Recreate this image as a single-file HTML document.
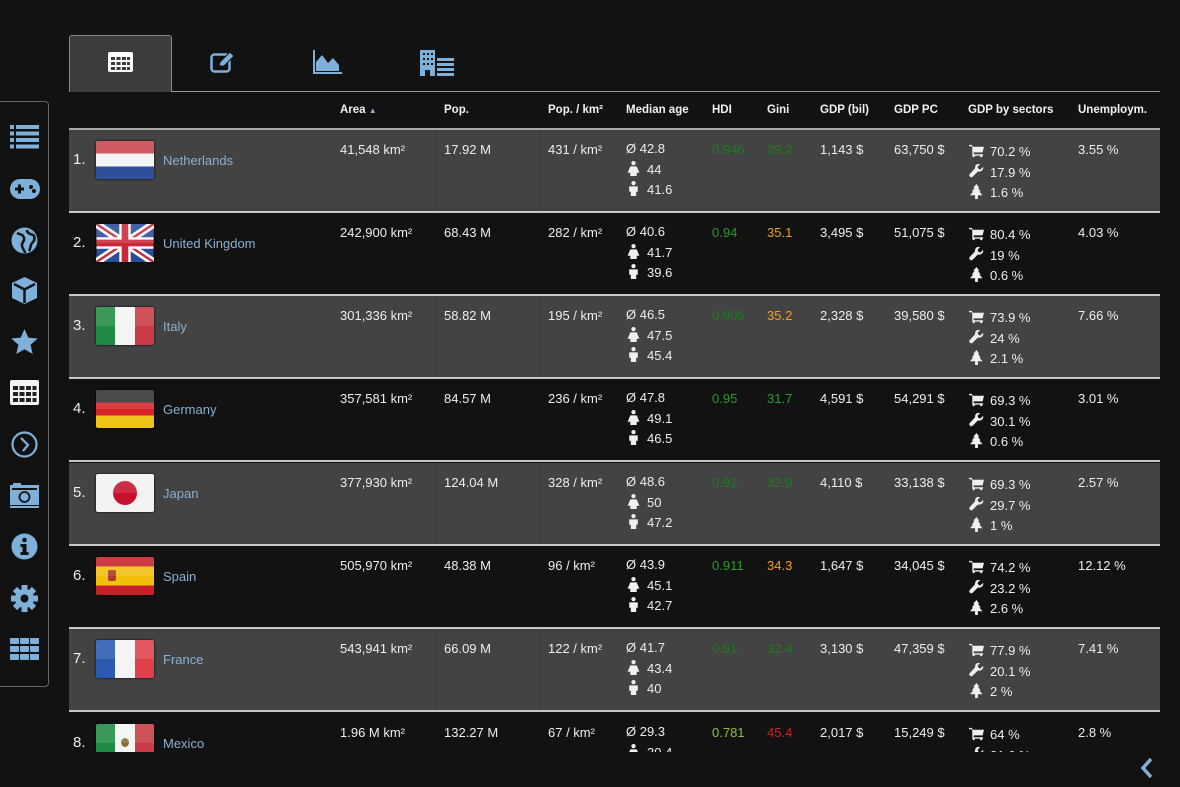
<!DOCTYPE html>
<html><head><meta charset="utf-8"><style>
*{margin:0;padding:0;box-sizing:border-box}
body{width:1180px;height:787px;background:#131212;font-family:"Liberation Sans",sans-serif;color:#eee;overflow:hidden;position:relative;font-size:13px}
.a{position:absolute}
.tab0{left:69px;top:35px;width:103px;height:57px;background:#3c3c3c;border:1px solid #888;border-bottom:none;border-radius:3px 3px 0 0}
.tline{left:171px;top:91px;width:989px;height:1px;background:#999}
.side{left:-4px;top:101px;width:53px;height:586px;border:1px solid #666;border-radius:4px;background:#111}
.hd{top:104px;font-weight:bold;font-size:11.5px;color:#f2f2f2}
.hline{left:69px;top:128px;width:1091px;height:2px;background:#aaa}
.clip{left:69px;top:130px;width:1091px;height:622px;overflow:hidden}
.row{position:absolute;left:0;width:1091px;height:83px;border-bottom:2px solid #c8c8c8}
.odd{background:#434343}
.row div{position:absolute}
.n{left:4px;top:21px;font-size:15px}
.f{left:27px;top:11px;width:58px;height:38px;border-radius:2px;overflow:hidden;box-shadow:0 0 2px #000}
.f::after{content:"";position:absolute;left:0;top:0;right:0;height:50%;background:rgba(255,255,255,.12)}
.nm{left:94px;top:23px;color:#8ab0d2}
.c{top:12px}
.ln{line-height:20.5px}
.ic{display:inline-block;width:15px;vertical-align:-2px;margin-right:6px}
.sep{top:0;width:1px;height:81px;background:#3e3e3e}
</style></head><body>
<div class="a tab0"></div>
<svg class="a" style="left:108px;top:52px" width="25" height="20" viewBox="0 0 25 20"><rect x="0" y="0" width="25" height="20" rx="2" fill="#fff"/><g fill="#3c3c3c"><rect x="3" y="5" width="4" height="3"/><rect x="8.5" y="5" width="4" height="3"/><rect x="14" y="5" width="4" height="3"/><rect x="19" y="5" width="3" height="3"/><rect x="3" y="10" width="4" height="3"/><rect x="8.5" y="10" width="4" height="3"/><rect x="14" y="10" width="4" height="3"/><rect x="19" y="10" width="3" height="3"/><rect x="3" y="15" width="4" height="3"/><rect x="8.5" y="15" width="4" height="3"/><rect x="14" y="15" width="4" height="3"/><rect x="19" y="15" width="3" height="3"/></g></svg>
<svg class="a" style="left:210px;top:50px" width="26" height="24" viewBox="0 0 26 24"><rect x="1.5" y="4.5" width="18" height="17" rx="3" fill="none" stroke="#7fb0da" stroke-width="2.5"/><path d="M9 16 L10 12 L20 2 L24 6 L14 16 Z" fill="#7fb0da" stroke="#131212" stroke-width="1"/></svg>
<svg class="a" style="left:313px;top:50px" width="29" height="24" viewBox="0 0 29 24"><path d="M1 0V23H29" fill="none" stroke="#7fb0da" stroke-width="2"/><path d="M3 21V12L9 5L15 13L20 8L26 15V21Z" fill="#7fb0da"/></svg>
<svg class="a" style="left:420px;top:50px" width="34" height="26" viewBox="0 0 34 26"><rect x="0" y="0" width="15" height="26" fill="#7fb0da"/><g fill="#131212"><rect x="3" y="3" width="2" height="2"/><rect x="7" y="3" width="2" height="2"/><rect x="11" y="3" width="2" height="2"/><rect x="3" y="8" width="2" height="2"/><rect x="7" y="8" width="2" height="2"/><rect x="11" y="8" width="2" height="2"/><rect x="3" y="13" width="2" height="2"/><rect x="7" y="13" width="2" height="2"/><rect x="11" y="13" width="2" height="2"/><rect x="5" y="20" width="5" height="6"/></g><g fill="#7fb0da"><rect x="17" y="8" width="17" height="3"/><rect x="17" y="13" width="17" height="3"/><rect x="17" y="18" width="17" height="3"/><rect x="17" y="23" width="17" height="3"/></g></svg>
<div class="a tline"></div>

<div class="a side"></div>
<svg class="a" style="left:10px;top:125px" width="29" height="24" viewBox="0 0 29 24" fill="#7fb0da"><rect x="0" y="0" width="4" height="4"/><rect x="6" y="0" width="23" height="4"/><rect x="0" y="6.5" width="4" height="4"/><rect x="6" y="6.5" width="23" height="4"/><rect x="0" y="13" width="4" height="4"/><rect x="6" y="13" width="23" height="4"/><rect x="0" y="19.5" width="4" height="4"/><rect x="6" y="19.5" width="23" height="4"/></svg>
<svg class="a" style="left:10px;top:179px" width="30" height="20" viewBox="0 0 30 20"><rect x="0" y="0" width="30" height="20" rx="10" fill="#7fb0da"/><path d="M5 10h9M9.5 5.5v9" stroke="#131212" stroke-width="3"/><circle cx="21" cy="8" r="2" fill="#131212"/><circle cx="24" cy="12" r="2" fill="#131212"/></svg>
<svg class="a" style="left:11px;top:227px" width="27" height="27" viewBox="0 0 27 27"><circle cx="13.5" cy="13.5" r="13" fill="#7fb0da"/><path d="M6 6c4 2 6 1 7 5s-3 4-2 8 3 5 3 7M16 3c0 3 3 4 6 5 2 1 2 5 0 7-3 2-2 6-4 9" stroke="#131212" stroke-width="2.5" fill="none"/></svg>
<svg class="a" style="left:11px;top:276px" width="27" height="29" viewBox="0 0 27 29"><path d="M13.5 1L26 7V22L13.5 28L1 22V7Z" fill="#7fb0da"/><path d="M3 8L13.5 13.5L24 8M13.5 13.5V27" stroke="#131212" stroke-width="2.5" fill="none"/></svg>
<svg class="a" style="left:10px;top:329px" width="29" height="27" viewBox="0 0 29 27"><path d="M14.5 0L18.3 8.6L27.8 9.5L20.6 15.8L22.7 25L14.5 20.2L6.3 25L8.4 15.8L1.2 9.5L10.7 8.6Z" fill="#7fb0da"/></svg>
<svg class="a" style="left:10px;top:380px" width="29" height="25" viewBox="0 0 29 25"><rect width="29" height="25" rx="2" fill="#f4f4f4"/><g fill="#222"><rect x="3" y="6" width="5" height="4"/><rect x="9.5" y="6" width="5" height="4"/><rect x="16" y="6" width="5" height="4"/><rect x="22.5" y="6" width="4" height="4"/><rect x="3" y="12" width="5" height="4"/><rect x="9.5" y="12" width="5" height="4"/><rect x="16" y="12" width="5" height="4"/><rect x="22.5" y="12" width="4" height="4"/><rect x="3" y="18" width="5" height="4"/><rect x="9.5" y="18" width="5" height="4"/><rect x="16" y="18" width="5" height="4"/><rect x="22.5" y="18" width="4" height="4"/></g></svg>
<svg class="a" style="left:11px;top:431px" width="27" height="27" viewBox="0 0 27 27"><circle cx="13.5" cy="13.5" r="12" fill="none" stroke="#7fb0da" stroke-width="2.2"/><path d="M10 7l7 7-5 6" fill="none" stroke="#7fb0da" stroke-width="2.2"/></svg>
<svg class="a" style="left:10px;top:483px" width="29" height="25" viewBox="0 0 29 25"><rect x="0" y="2" width="29" height="20" fill="#7fb0da"/><rect x="0" y="23" width="29" height="2" fill="#7fb0da"/><rect x="3" y="0" width="8" height="3" fill="#7fb0da"/><rect x="2" y="5" width="25" height="2" fill="#131212"/><circle cx="14.5" cy="14" r="5" fill="none" stroke="#131212" stroke-width="1.8"/></svg>
<svg class="a" style="left:11px;top:533px" width="27" height="27" viewBox="0 0 27 27"><circle cx="13.5" cy="13.5" r="13" fill="#7fb0da"/><circle cx="13.5" cy="7" r="2.3" fill="#131212"/><path d="M9.5 11h6v8h2v3h-8v-3h2v-5h-2z" fill="#131212"/></svg>
<svg class="a" style="left:11px;top:585px" width="27" height="27" viewBox="-13.5 -13.5 27 27"><g fill="#7fb0da"><circle r="9.5"/><rect x="-3" y="-13.5" width="6" height="27"/><rect x="-3" y="-13.5" width="6" height="27" transform="rotate(45)"/><rect x="-3" y="-13.5" width="6" height="27" transform="rotate(90)"/><rect x="-3" y="-13.5" width="6" height="27" transform="rotate(135)"/></g><circle r="4" fill="#131212"/></svg>
<svg class="a" style="left:10px;top:638px" width="29" height="22" viewBox="0 0 29 22" fill="#7fb0da"><rect x="0" y="0" width="9" height="6" rx="1"/><rect x="10" y="0" width="9" height="6" rx="1"/><rect x="20" y="0" width="9" height="6" rx="1"/><rect x="0" y="8" width="9" height="6" rx="1"/><rect x="10" y="8" width="9" height="6" rx="1"/><rect x="20" y="8" width="9" height="6" rx="1"/><rect x="0" y="16" width="9" height="6" rx="1"/><rect x="10" y="16" width="9" height="6" rx="1"/><rect x="20" y="16" width="9" height="6" rx="1"/></svg>

<div class="a hd" style="left:340px">Area <span style="font-size:8px;color:#8ab0d2">▲</span></div>
<div class="a hd" style="left:444px">Pop.</div>
<div class="a hd" style="left:548px">Pop. / km²</div>
<div class="a hd" style="left:626px">Median age</div>
<div class="a hd" style="left:712px">HDI</div>
<div class="a hd" style="left:767px">Gini</div>
<div class="a hd" style="left:820px">GDP (bil)</div>
<div class="a hd" style="left:894px">GDP PC</div>
<div class="a hd" style="left:968px">GDP by sectors</div>
<div class="a hd" style="left:1078px">Unemploym.</div>
<div class="a hline"></div>

<svg width="0" height="0" style="position:absolute"><defs>
<symbol id="fem" viewBox="0 0 12 14"><circle cx="6" cy="2" r="2" fill="#f0f0f0"/><path d="M3 5h6l2.5 6h-2.5v3h-6v-3H0.5z" fill="#f0f0f0"/></symbol>
<symbol id="mal" viewBox="0 0 12 14"><circle cx="6" cy="2" r="2" fill="#f0f0f0"/><path d="M2 5h8v5h-1.5v4h-5v-4H2z" fill="#f0f0f0"/></symbol>
<symbol id="cart" viewBox="0 0 16 14"><path d="M0 1h3l1 2h12l-1.5 6H5v2h10v1.5H3.5V3.5L2.5 2.5H0z" fill="#f0f0f0"/><circle cx="5" cy="13" r="1.2" fill="#f0f0f0"/><circle cx="13" cy="13" r="1.2" fill="#f0f0f0"/></symbol>
<symbol id="wr" viewBox="0 0 16 16"><path d="M15 3l-3 3-2-1-1-2 3-3c-3-1-6 1-5.5 4.5L1 10.5a2 2 0 003 3l5.5-5.5C13 9 16 6 15 3z" fill="#f0f0f0"/></symbol>
<symbol id="tr" viewBox="0 0 14 16"><path d="M7 0l3 4h-1.5l3 4h-1.5l3.5 4H8.5v4h-3v-4H0l3.5-4H2l3-4H3.5z" fill="#f0f0f0"/></symbol>
</defs></svg>

<div class="a clip">
<div class="row odd" style="top:0">
<div class="sep" style="left:265px"></div><div class="sep" style="left:366px"></div><div class="sep" style="left:471px"></div><div class="sep" style="left:549px"></div>
<div class="n">1.</div>
<div class="f" style="background:linear-gradient(#c9444f 0 33%,#f4f4f4 33% 67%,#2f4f98 67%)"></div>
<div class="nm">Netherlands</div>
<div class="c" style="left:271px">41,548 km²</div><div class="c" style="left:375px">17.92 M</div><div class="c" style="left:479px">431 / km²</div>
<div class="c ln" style="left:557px;top:9px">Ø 42.8<br><svg class="ic" height="15"><use href="#fem"/></svg>44<br><svg class="ic" height="15"><use href="#mal"/></svg>41.6</div>
<div class="c" style="left:643px;color:#1d7c1d">0.946</div><div class="c" style="left:698px;color:#1d7c1d">29.2</div>
<div class="c" style="left:751px">1,143 $</div><div class="c" style="left:825px">63,750 $</div>
<div class="c ln" style="left:900px;top:12px"><svg class="ic" height="15"><use href="#cart"/></svg>70.2 %<br><svg class="ic" height="15"><use href="#wr"/></svg>17.9 %<br><svg class="ic" height="15"><use href="#tr"/></svg>1.6 %</div>
<div class="c" style="left:1009px">3.55 %</div>
</div>

<div class="row" style="top:83px">
<div class="n">2.</div>
<div class="f"><svg width="58" height="38" viewBox="0 0 60 40"><rect width="60" height="40" fill="#2a4c9a"/><path d="M0 0L60 40M60 0L0 40" stroke="#fff" stroke-width="8"/><path d="M0 0L60 40M60 0L0 40" stroke="#c8283a" stroke-width="2.5"/><path d="M30 0V40M0 20H60" stroke="#fff" stroke-width="12"/><path d="M30 0V40M0 20H60" stroke="#c8283a" stroke-width="7"/></svg></div>
<div class="nm">United Kingdom</div>
<div class="c" style="left:271px">242,900 km²</div><div class="c" style="left:375px">68.43 M</div><div class="c" style="left:479px">282 / km²</div>
<div class="c ln" style="left:557px;top:9px">Ø 40.6<br><svg class="ic" height="15"><use href="#fem"/></svg>41.7<br><svg class="ic" height="15"><use href="#mal"/></svg>39.6</div>
<div class="c" style="left:643px;color:#2a9a2a">0.94</div><div class="c" style="left:698px;color:#f0a020">35.1</div>
<div class="c" style="left:751px">3,495 $</div><div class="c" style="left:825px">51,075 $</div>
<div class="c ln" style="left:900px;top:12px"><svg class="ic" height="15"><use href="#cart"/></svg>80.4 %<br><svg class="ic" height="15"><use href="#wr"/></svg>19 %<br><svg class="ic" height="15"><use href="#tr"/></svg>0.6 %</div>
<div class="c" style="left:1009px">4.03 %</div>
</div>

<div class="row odd" style="top:166px">
<div class="sep" style="left:265px"></div><div class="sep" style="left:366px"></div><div class="sep" style="left:471px"></div><div class="sep" style="left:549px"></div>
<div class="n">3.</div>
<div class="f" style="background:linear-gradient(90deg,#1f8a45 0 33%,#f4f4f4 33% 67%,#c83a44 67%)"></div>
<div class="nm">Italy</div>
<div class="c" style="left:271px">301,336 km²</div><div class="c" style="left:375px">58.82 M</div><div class="c" style="left:479px">195 / km²</div>
<div class="c ln" style="left:557px;top:9px">Ø 46.5<br><svg class="ic" height="15"><use href="#fem"/></svg>47.5<br><svg class="ic" height="15"><use href="#mal"/></svg>45.4</div>
<div class="c" style="left:643px;color:#1d7c1d">0.906</div><div class="c" style="left:698px;color:#f0a020">35.2</div>
<div class="c" style="left:751px">2,328 $</div><div class="c" style="left:825px">39,580 $</div>
<div class="c ln" style="left:900px;top:12px"><svg class="ic" height="15"><use href="#cart"/></svg>73.9 %<br><svg class="ic" height="15"><use href="#wr"/></svg>24 %<br><svg class="ic" height="15"><use href="#tr"/></svg>2.1 %</div>
<div class="c" style="left:1009px">7.66 %</div>
</div>

<div class="row" style="top:249px">
<div class="n">4.</div>
<div class="f" style="background:linear-gradient(#333 0 33%,#d8232a 33% 67%,#f0c419 67%)"></div>
<div class="nm">Germany</div>
<div class="c" style="left:271px">357,581 km²</div><div class="c" style="left:375px">84.57 M</div><div class="c" style="left:479px">236 / km²</div>
<div class="c ln" style="left:557px;top:9px">Ø 47.8<br><svg class="ic" height="15"><use href="#fem"/></svg>49.1<br><svg class="ic" height="15"><use href="#mal"/></svg>46.5</div>
<div class="c" style="left:643px;color:#2a9a2a">0.95</div><div class="c" style="left:698px;color:#2a9a2a">31.7</div>
<div class="c" style="left:751px">4,591 $</div><div class="c" style="left:825px">54,291 $</div>
<div class="c ln" style="left:900px;top:12px"><svg class="ic" height="15"><use href="#cart"/></svg>69.3 %<br><svg class="ic" height="15"><use href="#wr"/></svg>30.1 %<br><svg class="ic" height="15"><use href="#tr"/></svg>0.6 %</div>
<div class="c" style="left:1009px">3.01 %</div>
</div>

<div class="row odd" style="top:333px">
<div class="sep" style="left:265px"></div><div class="sep" style="left:366px"></div><div class="sep" style="left:471px"></div><div class="sep" style="left:549px"></div>
<div class="n">5.</div>
<div class="f" style="background:#f2f2f2"><div style="left:17px;top:7px;width:24px;height:24px;border-radius:50%;background:#c8102e"></div></div>
<div class="nm">Japan</div>
<div class="c" style="left:271px">377,930 km²</div><div class="c" style="left:375px">124.04 M</div><div class="c" style="left:479px">328 / km²</div>
<div class="c ln" style="left:557px;top:9px">Ø 48.6<br><svg class="ic" height="15"><use href="#fem"/></svg>50<br><svg class="ic" height="15"><use href="#mal"/></svg>47.2</div>
<div class="c" style="left:643px;color:#1d7c1d">0.92</div><div class="c" style="left:698px;color:#1d7c1d">32.9</div>
<div class="c" style="left:751px">4,110 $</div><div class="c" style="left:825px">33,138 $</div>
<div class="c ln" style="left:900px;top:12px"><svg class="ic" height="15"><use href="#cart"/></svg>69.3 %<br><svg class="ic" height="15"><use href="#wr"/></svg>29.7 %<br><svg class="ic" height="15"><use href="#tr"/></svg>1 %</div>
<div class="c" style="left:1009px">2.57 %</div>
</div>

<div class="row" style="top:416px">
<div class="n">6.</div>
<div class="f" style="background:linear-gradient(#c8202a 0 25%,#f2c00c 25% 75%,#c8202a 75%)"><div style="left:12px;top:13px;width:8px;height:11px;background:#b0352a;border-radius:2px"></div></div>
<div class="nm">Spain</div>
<div class="c" style="left:271px">505,970 km²</div><div class="c" style="left:375px">48.38 M</div><div class="c" style="left:479px">96 / km²</div>
<div class="c ln" style="left:557px;top:9px">Ø 43.9<br><svg class="ic" height="15"><use href="#fem"/></svg>45.1<br><svg class="ic" height="15"><use href="#mal"/></svg>42.7</div>
<div class="c" style="left:643px;color:#2a9a2a">0.911</div><div class="c" style="left:698px;color:#f0a020">34.3</div>
<div class="c" style="left:751px">1,647 $</div><div class="c" style="left:825px">34,045 $</div>
<div class="c ln" style="left:900px;top:12px"><svg class="ic" height="15"><use href="#cart"/></svg>74.2 %<br><svg class="ic" height="15"><use href="#wr"/></svg>23.2 %<br><svg class="ic" height="15"><use href="#tr"/></svg>2.6 %</div>
<div class="c" style="left:1009px">12.12 %</div>
</div>

<div class="row odd" style="top:499px">
<div class="sep" style="left:265px"></div><div class="sep" style="left:366px"></div><div class="sep" style="left:471px"></div><div class="sep" style="left:549px"></div>
<div class="n">7.</div>
<div class="f" style="background:linear-gradient(90deg,#2b59b0 0 33%,#f4f4f4 33% 67%,#e0404a 67%)"></div>
<div class="nm">France</div>
<div class="c" style="left:271px">543,941 km²</div><div class="c" style="left:375px">66.09 M</div><div class="c" style="left:479px">122 / km²</div>
<div class="c ln" style="left:557px;top:9px">Ø 41.7<br><svg class="ic" height="15"><use href="#fem"/></svg>43.4<br><svg class="ic" height="15"><use href="#mal"/></svg>40</div>
<div class="c" style="left:643px;color:#1d7c1d">0.91</div><div class="c" style="left:698px;color:#1d7c1d">32.4</div>
<div class="c" style="left:751px">3,130 $</div><div class="c" style="left:825px">47,359 $</div>
<div class="c ln" style="left:900px;top:12px"><svg class="ic" height="15"><use href="#cart"/></svg>77.9 %<br><svg class="ic" height="15"><use href="#wr"/></svg>20.1 %<br><svg class="ic" height="15"><use href="#tr"/></svg>2 %</div>
<div class="c" style="left:1009px">7.41 %</div>
</div>

<div class="row" style="top:583px">
<div class="n">8.</div>
<div class="f" style="background:linear-gradient(90deg,#1f8a45 0 33%,#f4f4f4 33% 67%,#c83a44 67%)"><div style="left:25px;top:14px;width:8px;height:9px;background:#8a6a3a;border-radius:50%"></div></div>
<div class="nm">Mexico</div>
<div class="c" style="left:271px">1.96 M km²</div><div class="c" style="left:375px">132.27 M</div><div class="c" style="left:479px">67 / km²</div>
<div class="c ln" style="left:557px;top:9px">Ø 29.3<br><svg class="ic" height="15"><use href="#fem"/></svg>30.4<br><svg class="ic" height="15"><use href="#mal"/></svg>28.3</div>
<div class="c" style="left:643px;color:#8fc040">0.781</div><div class="c" style="left:698px;color:#d02020">45.4</div>
<div class="c" style="left:751px">2,017 $</div><div class="c" style="left:825px">15,249 $</div>
<div class="c ln" style="left:900px;top:12px"><svg class="ic" height="15"><use href="#cart"/></svg>64 %<br><svg class="ic" height="15"><use href="#wr"/></svg>31.6 %<br><svg class="ic" height="15"><use href="#tr"/></svg>4.4 %</div>
<div class="c" style="left:1009px">2.8 %</div>
</div>
</div>

<svg class="a" style="left:1139px;top:757px" width="16" height="22" viewBox="0 0 16 22"><path d="M12 2L4 11L12 20" fill="none" stroke="#7fb0da" stroke-width="3.5"/></svg>
</body></html>
